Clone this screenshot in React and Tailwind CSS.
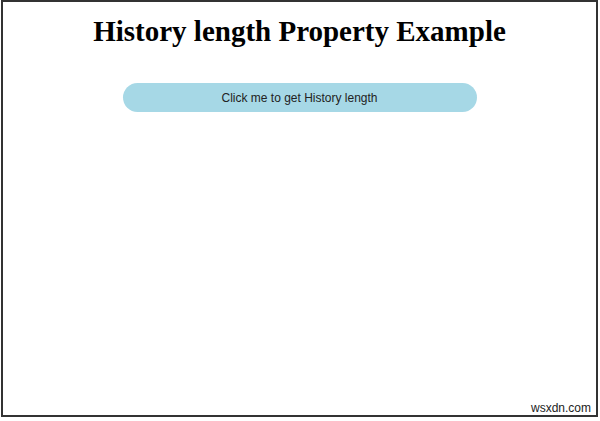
import React from 'react';

const App = () => {
    return (
        <div className="w-[600px] h-[421px] bg-white relative">
            {/* framed page */}
            <div className="w-[597px] h-[417px] border-2 border-[#333] flex flex-col items-center ml-[1px]">
                <h1 className="mt-[11px] text-[29px] leading-[36px] font-bold text-black font-['Liberation_Serif',serif]">
                    History length Property Example
                </h1>
                <button className="mt-[34px] w-[354px] h-[29px] rounded-full bg-[#a6d8e6] text-[12px] text-[#222] font-['Liberation_Sans',Arial,sans-serif]">
                    Click me to get History length
                </button>
            </div>
            <span className="absolute left-[531px] top-[399px] text-[12px] text-[#222] font-['Liberation_Sans',Arial,sans-serif]">
                wsxdn.com
            </span>
        </div>
    );
};

export default App;
